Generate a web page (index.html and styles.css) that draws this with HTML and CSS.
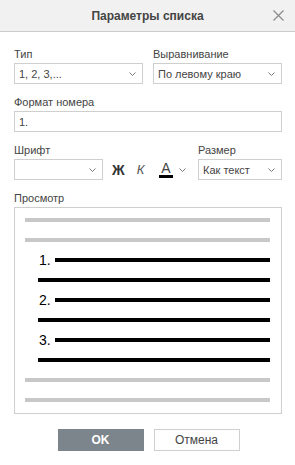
FILE: index.html
```html
<!DOCTYPE html>
<html lang="ru">

<head>
    <meta charset="UTF-8">
    <meta name="viewport" content="width=device-width, initial-scale=1.0">
    <title>Параметры списка</title>
    <link rel="stylesheet" href="styles.css">
</head>

<body>
    <div class="dialog">
        <div class="dialogHeader">
            <span></span>
            <span class="dialogTitle">Параметры списка</span>
            <button class="closeButton" aria-label="close">
                <svg width="11" height="11" viewBox="0 0 11 11">
                    <path d="M0.5 0.5 L10.5 10.5 M10.5 0.5 L0.5 10.5" stroke="#8a8a8a" stroke-width="1.2" fill="none" />
                </svg>
            </button>
        </div>

        <div class="dialogBody">
            <div class="row">
                <div class="field half">
                    <label class="fieldLabel">Тип</label>
                    <div class="combo">
                        <span>1, 2, 3,...</span>
                        <svg class="chevron" width="7" height="4" viewBox="0 0 7 4"><path d="M0.5 0.5 L3.5 3.5 L6.5 0.5" stroke="#777" fill="none" /></svg>
                    </div>
                </div>
                <div class="field half">
                    <label class="fieldLabel">Выравнивание</label>
                    <div class="combo">
                        <span>По левому краю</span>
                        <svg class="chevron" width="7" height="4" viewBox="0 0 7 4"><path d="M0.5 0.5 L3.5 3.5 L6.5 0.5" stroke="#777" fill="none" /></svg>
                    </div>
                </div>
            </div>

            <div class="field">
                <label class="fieldLabel">Формат номера</label>
                <div class="textInput">1.</div>
            </div>

            <div class="row">
                <div class="field fontField">
                    <label class="fieldLabel">Шрифт</label>
                    <div class="combo">
                        <span></span>
                        <svg class="chevron" width="7" height="4" viewBox="0 0 7 4"><path d="M0.5 0.5 L3.5 3.5 L6.5 0.5" stroke="#777" fill="none" /></svg>
                    </div>
                </div>
                <div class="toolButtons">
                    <span class="toolBold">Ж</span>
                    <span class="toolItalic">К</span>
                    <span class="toolColor">
                        <span class="colorLetter">A</span>
                        <svg class="chevron" width="7" height="4" viewBox="0 0 7 4"><path d="M0.5 0.5 L3.5 3.5 L6.5 0.5" stroke="#777" fill="none" /></svg>
                    </span>
                </div>
                <div class="field sizeField">
                    <label class="fieldLabel">Размер</label>
                    <div class="combo">
                        <span>Как текст</span>
                        <svg class="chevron" width="7" height="4" viewBox="0 0 7 4"><path d="M0.5 0.5 L3.5 3.5 L6.5 0.5" stroke="#777" fill="none" /></svg>
                    </div>
                </div>
            </div>

            <div class="field">
                <label class="fieldLabel">Просмотр</label>
                <div class="preview">
                    <div class="pLine grey"></div>
                    <div class="pLine grey"></div>
                    <div class="pItem"><span class="pNum">1.</span><div class="pBar"></div></div>
                    <div class="pLine black"></div>
                    <div class="pItem"><span class="pNum">2.</span><div class="pBar"></div></div>
                    <div class="pLine black"></div>
                    <div class="pItem"><span class="pNum">3.</span><div class="pBar"></div></div>
                    <div class="pLine black"></div>
                    <div class="pLine grey"></div>
                    <div class="pLine grey"></div>
                </div>
            </div>

            <div class="dialogButtons">
                <button class="btn btnPrimary">OK</button>
                <button class="btn">Отмена</button>
            </div>
        </div>
    </div>
</body>

</html>
```

FILE: styles.css
```css
* {
    box-sizing: border-box;
}

body {
    margin: 0;
    background: #fff;
    font-family: "Liberation Sans", Arial, sans-serif;
    font-size: 11px;
    color: #444;
}

.dialog {
    width: 295px;
}

.dialogHeader {
    height: 32px;
    background: #f1f1f1;
    border-bottom: 1px solid #cbcbcb;
    display: grid;
    grid-template-columns: 1fr auto 1fr;
    align-items: center;
}

.dialogTitle {
    font-size: 12px;
    font-weight: bold;
    color: #444;
}

.closeButton {
    justify-self: end;
    margin-right: 11px;
    padding: 0;
    border: none;
    background: none;
    width: 11px;
    height: 11px;
    display: flex;
}

.dialogBody {
    padding: 15px 13px 0 14px;
    display: flex;
    flex-direction: column;
    gap: 11px;
}

.row {
    display: flex;
    align-items: flex-end;
    gap: 10px;
}

.field {
    display: flex;
    flex-direction: column;
}

.half {
    width: 129px;
}

.fieldLabel {
    line-height: 14px;
    margin-bottom: 2px;
}

.combo,
.textInput {
    height: 21px;
    border: 1px solid #cfcfcf;
    display: flex;
    align-items: center;
    padding: 0 6px 0 4px;
    color: #444;
}

.combo span {
    flex: 1;
    white-space: nowrap;
}

.chevron {
    flex: none;
}

.fontField {
    width: 89px;
}

.toolButtons {
    height: 21px;
    display: flex;
    align-items: center;
    width: 85px;
    margin-left: -1px;
    margin-right: -10px;
}

.toolBold {
    font-size: 14px;
    font-weight: bold;
    color: #333;
    margin-left: 0;
}

.toolItalic {
    font-size: 13px;
    font-style: italic;
    color: #555;
    margin-left: 12px;
}

.toolColor {
    display: flex;
    align-items: center;
    margin-left: 15px;
    gap: 6px;
}

.colorLetter {
    font-size: 14px;
    line-height: 14px;
    color: #444;
    padding: 0 2px;
    border-bottom: 3px solid #000;
}

.sizeField {
    width: 84px;
    margin-left: auto;
}

.preview {
    height: 207px;
    border: 1px solid #cfcfcf;
    padding: 10px 11px 0 10px;
    display: flex;
    flex-direction: column;
    gap: 16px;
}

.pLine {
    height: 4px;
    flex: none;
}

.pLine.grey {
    background: #c8c8c8;
}

.pLine.black {
    background: #000;
    margin-left: 13px;
}

.pItem {
    height: 4px;
    flex: none;
    display: flex;
    align-items: center;
    margin-left: 13px;
}

.pNum {
    font-size: 14px;
    line-height: 13px;
    color: #000;
    width: 17px;
    padding-left: 1px;
    flex: none;
}

.pBar {
    flex: 1;
    height: 4px;
    background: #000;
}

.dialogButtons {
    display: flex;
    justify-content: center;
    gap: 10px;
    margin-top: 4px;
    margin-left: 1px;
}

.btn {
    width: 86px;
    height: 22px;
    border: 1px solid #cfcfcf;
    background: #fff;
    font-family: "Liberation Sans", Arial, sans-serif;
    font-size: 12px;
    color: #444;
    padding: 0;
}

.btnPrimary {
    background: #7d858c;
    border-color: #7d858c;
    color: #fff;
    font-weight: bold;
}
```
